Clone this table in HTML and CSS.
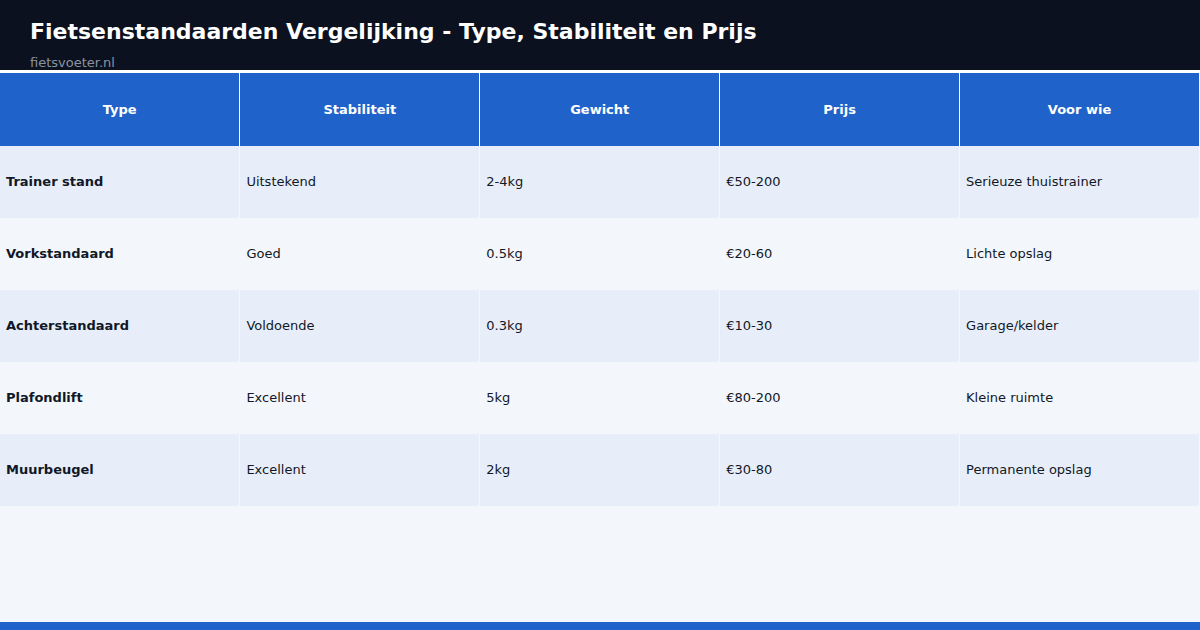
FILE: index.html
```html
<!DOCTYPE html>
<html lang="nl">
<head>
<meta charset="utf-8">
<title>Fietsenstandaarden Vergelijking</title>
<link rel="stylesheet" href="styles.css">
</head>
<body>
<div class="page">
  <header class="top">
    <h1 class="title">Fietsenstandaarden Vergelijking - Type, Stabiliteit en Prijs</h1>
    <div class="site">fietsvoeter.nl</div>
  </header>
  <main class="content">
    <table class="cmp">
      <thead>
        <tr><th>Type</th><th>Stabiliteit</th><th>Gewicht</th><th>Prijs</th><th>Voor wie</th></tr>
      </thead>
      <tbody>
        <tr><td class="name">Trainer stand</td><td>Uitstekend</td><td>2-4kg</td><td>€50-200</td><td>Serieuze thuistrainer</td></tr>
        <tr><td class="name">Vorkstandaard</td><td>Goed</td><td>0.5kg</td><td>€20-60</td><td>Lichte opslag</td></tr>
        <tr><td class="name">Achterstandaard</td><td>Voldoende</td><td>0.3kg</td><td>€10-30</td><td>Garage/kelder</td></tr>
        <tr><td class="name">Plafondlift</td><td>Excellent</td><td>5kg</td><td>€80-200</td><td>Kleine ruimte</td></tr>
        <tr><td class="name">Muurbeugel</td><td>Excellent</td><td>2kg</td><td>€30-80</td><td>Permanente opslag</td></tr>
      </tbody>
    </table>
  </main>
  <footer class="bottom"></footer>
</div>
</body>
</html>
```
FILE: styles.css
```css
html, body {
  margin: 0;
  padding: 0;
}
body {
  font-family: "DejaVu Sans", sans-serif;
  background: #f3f6fb;
}
.page {
  width: 1200px;
  height: 630px;
  display: flex;
  flex-direction: column;
  overflow: hidden;
}
.top {
  background: #0b111e;
  box-sizing: border-box;
  padding: 18px 30px 0;
  border-bottom: 3px solid #ffffff;
  height: 73px;
}
.title {
  margin: 0;
  color: #ffffff;
  font-size: 22px;
  font-weight: bold;
  line-height: 28px;
}
.site {
  color: #8b93a1;
  font-size: 13px;
  line-height: 16px;
  margin-top: 9px;
}
.content {
  flex: 1;
}
.cmp {
  width: 1200px;
  border-collapse: collapse;
  table-layout: fixed;
}
.cmp th {
  background: #1f62c9;
  color: #ffffff;
  font-size: 13px;
  font-weight: bold;
  height: 73px;
  padding: 0;
  text-align: center;
  border-right: 1px solid #ffffff;
}
.cmp td {
  height: 72px;
  box-sizing: border-box;
  padding: 0 6px 2px;
  font-size: 13px;
  color: #111827;
  border-right: 1px solid #f3f6fb;
}
.cmp th:last-child, .cmp td:last-child {
  border-right: 1px solid #f3f6fb;
}
.cmp tbody tr:nth-child(odd) td {
  background: #e8eef9;
}
.cmp tbody tr:nth-child(even) td {
  background: #f3f6fb;
}
.cmp td.name {
  font-weight: bold;
}
.bottom {
  height: 8px;
  background: #1f62c9;
}
```
